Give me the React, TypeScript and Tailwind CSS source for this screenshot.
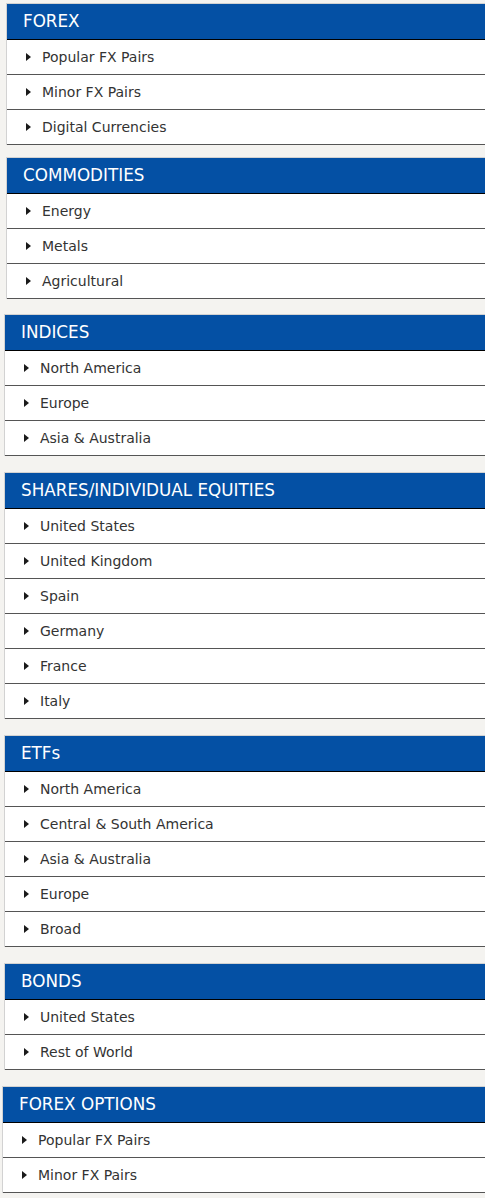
const sections = [
  { title: 'FOREX', wrap: 'mt-[3px] ml-[6px]', items: ['Popular FX Pairs', 'Minor FX Pairs', 'Digital Currencies'] },
  { title: 'COMMODITIES', wrap: 'mt-[12px] ml-[6px]', items: ['Energy', 'Metals', 'Agricultural'] },
  { title: 'INDICES', wrap: 'mt-[15px] ml-[4px]', items: ['North America', 'Europe', 'Asia & Australia'] },
  {
    title: 'SHARES/INDIVIDUAL EQUITIES',
    wrap: 'mt-[16px] ml-[4px]',
    items: ['United States', 'United Kingdom', 'Spain', 'Germany', 'France', 'Italy'],
  },
  {
    title: 'ETFs',
    wrap: 'mt-[16px] ml-[4px]',
    items: ['North America', 'Central & South America', 'Asia & Australia', 'Europe', 'Broad'],
  },
  { title: 'BONDS', wrap: 'mt-[16px] ml-[4px]', items: ['United States', 'Rest of World'] },
  { title: 'FOREX OPTIONS', wrap: 'mt-[16px] ml-[2px]', items: ['Popular FX Pairs', 'Minor FX Pairs'] },
];

function Arrow() {
  return (
    <svg width="5" height="8" viewBox="0 0 5 8" className="shrink-0">
      <path d="M0 0 L5 4 L0 8 Z" fill="#1a1a1a" />
    </svg>
  );
}

export default function App() {
  return (
    <div className="min-h-screen w-[485px] overflow-hidden bg-[#f4f3f0] pb-4 font-['DejaVu_Sans',Verdana,sans-serif]">
      {sections.map((s) => (
        <div key={s.title} className={`${s.wrap} border-l border-t border-[#d2d2d2] bg-white`}>
          <div className="flex h-[36px] items-center border-b border-black bg-[#0450a4] pl-4 pt-[1px] text-[16.8px] text-white">
            {s.title}
          </div>
          {s.items.map((item) => (
            <div
              key={item}
              className="flex h-[35px] items-center border-b border-[#555] pl-[19px] text-[14px] text-[#333]"
            >
              <Arrow />
              <span className="ml-[11px]">{item}</span>
            </div>
          ))}
        </div>
      ))}
    </div>
  );
}
